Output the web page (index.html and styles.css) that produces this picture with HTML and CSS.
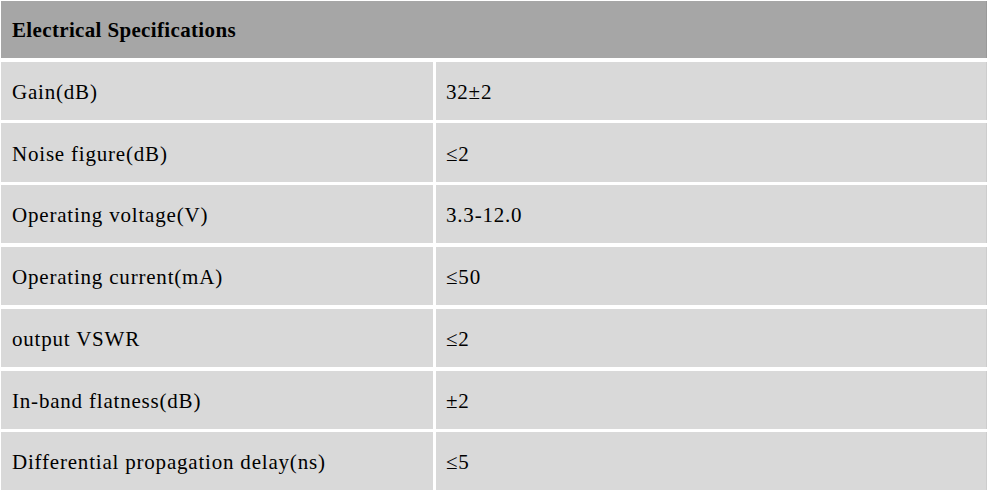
FILE: index.html
```html
<!DOCTYPE html>
<html>
<head>
<meta charset="utf-8">
<title>Electrical Specifications</title>
<link rel="stylesheet" href="styles.css">
</head>
<body>
<div class="spec">
  <div class="head">Electrical Specifications</div>
  <div class="row"><div class="cell name">Gain(dB)</div><div class="cell val">32±2</div></div>
  <div class="row"><div class="cell name">Noise figure(dB)</div><div class="cell val">≤2</div></div>
  <div class="row"><div class="cell name">Operating voltage(V)</div><div class="cell val">3.3-12.0</div></div>
  <div class="row"><div class="cell name">Operating current(mA)</div><div class="cell val">≤50</div></div>
  <div class="row"><div class="cell name">output VSWR</div><div class="cell val">≤2</div></div>
  <div class="row"><div class="cell name">In-band flatness(dB)</div><div class="cell val">±2</div></div>
  <div class="row"><div class="cell name">Differential propagation delay(ns)</div><div class="cell val">≤5</div></div>
</div>
</body>
</html>
```
FILE: styles.css
```css
html, body {
  margin: 0;
  padding: 0;
  background: #ffffff;
}
body {
  padding: 1px 3px 0 1px;
  font-family: "Liberation Serif", "Times New Roman", serif;
  font-size: 21px;
  letter-spacing: 0.8px;
  color: #000;
  overflow: hidden;
}
.spec {
  display: flex;
  flex-direction: column;
  gap: 3.7px;
  width: 986px;
}
.head {
  height: 57px;
  background: #a6a6a6;
  border-right: 1px solid #999;
  box-sizing: border-box;
  display: flex;
  align-items: center;
  padding-left: 11px;
  padding-top: 1px;
  font-weight: bold;
  letter-spacing: 0.35px;
}
.row {
  display: grid;
  grid-template-columns: 432px 1fr;
  column-gap: 3px;
  height: 58.1px;
}
.cell {
  background: #d9d9d9;
  display: flex;
  align-items: center;
  padding-top: 3px;
  box-sizing: border-box;
}
.name {
  padding-left: 11px;
}
.val {
  padding-left: 10px;
  border-right: 1px solid #cdcdcd;
}
```
